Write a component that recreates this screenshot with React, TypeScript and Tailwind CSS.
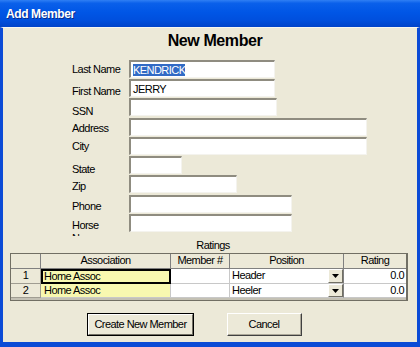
import React from "react";

function Row({
  label,
  labelPad,
  fieldW,
  mt,
  children,
  labelClip,
}: {
  label: string;
  labelPad: string;
  fieldW: string;
  mt: string;
  children?: React.ReactNode;
  labelClip?: boolean;
}) {
  return (
    <div className={`flex h-[18px] pl-[69px] ${mt}`}>
      <div className={`w-[57px] shrink-0 ${labelPad}`}>
        <div
          className={
            labelClip
              ? "w-[40px] h-[17px] overflow-hidden leading-[13px]"
              : "leading-[13px] whitespace-nowrap"
          }
        >
          {label}
        </div>
      </div>
      <div
        className={`h-[18px] ${fieldW} bg-white border-t-2 border-l-2 border-t-[#8F8C80] border-l-[#8F8C80] border-b border-r border-b-[#F4F3EE] border-r-[#F4F3EE] pl-[2px] pt-[1px] leading-[14px] whitespace-nowrap`}
      >
        {children}
      </div>
    </div>
  );
}

function DropBtn() {
  return (
    <div className="w-[15px] h-full bg-[#ECE9D8] border-t border-l border-t-white border-l-white border-r border-b border-r-[#716F64] border-b-[#716F64] flex items-center justify-center">
      <svg width="7" height="4" viewBox="0 0 7 4">
        <polygon points="0,0 7,0 3.5,4" fill="#000" />
      </svg>
    </div>
  );
}

export default function App() {
  return (
    <div className="w-[420px] h-[347px] overflow-hidden flex flex-col font-['Liberation_Sans',Arial,sans-serif] text-[11px] tracking-[-0.55px] text-black">
      {/* title bar */}
      <div className="h-[27px] shrink-0 bg-[linear-gradient(to_bottom,#2F7FF4_0%,#0A60EA_12%,#0056E6_45%,#004FDD_75%,#0043C9_100%)] flex items-center pl-[6px]">
        <span className="text-white font-bold text-[12px] tracking-[-0.4px] [text-shadow:1px_1px_0_#0A2A8A]">
          Add Member
        </span>
      </div>
      {/* body */}
      <div className="flex-1 flex flex-col bg-[#ECE9D8] border-l-[3px] border-r-[3px] border-b-[5px] border-[#0B4BD6] border-t border-t-[#F7F6F0]">
        <div className="mt-[3px] h-[20px] leading-[20px] pl-[10px] text-center font-bold text-[16px] tracking-[-0.4px]">
          New Member
        </div>

        <div className="mt-[9px] flex flex-col">
          <Row label="Last Name" labelPad="pt-[2.5px]" fieldW="w-[146px]" mt="">
            <span className="bg-[#316AC5] text-white">KENDRICK</span>
          </Row>
          <Row label="First Name" labelPad="pt-[5.5px]" fieldW="w-[146px]" mt="mt-[1px]">
            JERRY
          </Row>
          <Row label="SSN" labelPad="pt-[6.5px]" fieldW="w-[148px]" mt="mt-[1px]" />
          <Row label="Address" labelPad="pt-[3.5px]" fieldW="w-[238px]" mt="mt-[2px]" />
          <Row label="City" labelPad="pt-[3px]" fieldW="w-[238px]" mt="mt-[1px]" />
          <Row label="State" labelPad="pt-[6.5px]" fieldW="w-[53px]" mt="mt-[1px]" />
          <Row label="Zip" labelPad="pt-[4.5px]" fieldW="w-[108px]" mt="mt-[1px]" />
          <Row label="Phone" labelPad="pt-[4.5px]" fieldW="w-[163px]" mt="mt-[2px]" />
          <Row
            label="Horse Name"
            labelPad="pt-[4.5px]"
            fieldW="w-[163px]"
            mt="mt-[1px]"
            labelClip
          />
        </div>

        <div className="mt-[6px] h-[14px] leading-[14px] pl-[6px] text-center">
          Ratings
        </div>

        {/* grid */}
        <div className="mt-[1px] ml-[7px] w-[398px] border border-[#716F64] border-r-2 bg-[#C4C1B4] leading-[13px]">
          <div className="flex h-[15px] border-b border-[#808080] bg-[#ECE9D8] text-center">
            <div className="w-[30px] border-r border-[#808080]" />
            <div className="w-[130px] border-r border-[#808080]">Association</div>
            <div className="w-[59px] border-r border-[#808080]">Member #</div>
            <div className="w-[114px] border-r border-[#808080]">Position</div>
            <div className="w-[62px]">Rating</div>
          </div>
          {/* row 1 */}
          <div className="flex h-[15px]">
            <div className="w-[30px] bg-[#ECE9D8] border-r border-b border-[#A09D92] text-center">
              1
            </div>
            <div className="w-[130px] bg-[#F8F8B0] border-2 border-black pl-[1px] leading-[11px]">
              Home Assoc
            </div>
            <div className="w-[59px] bg-white border-r border-b border-[#C8C8C8]" />
            <div className="w-[114px] bg-white border-r border-b border-r-[#808080] border-b-[#C8C8C8] flex">
              <div className="flex-1 pl-[2px]">Header</div>
              <DropBtn />
            </div>
            <div className="w-[62px] bg-white border-b border-[#C8C8C8] text-right pr-[2px]">
              0.0
            </div>
          </div>
          {/* row 2 */}
          <div className="flex h-[14px]">
            <div className="w-[30px] bg-[#ECE9D8] border-r border-b border-[#A09D92] text-center">
              2
            </div>
            <div className="w-[130px] bg-[#F8F8B0] border-r border-b border-[#C8C8C8] pl-[3px]">
              Home Assoc
            </div>
            <div className="w-[59px] bg-white border-r border-b border-[#C8C8C8]" />
            <div className="w-[114px] bg-white border-r border-b border-r-[#808080] border-b-[#C8C8C8] flex">
              <div className="flex-1 pl-[2px]">Heeler</div>
              <DropBtn />
            </div>
            <div className="w-[62px] bg-white border-b border-[#C8C8C8] text-right pr-[2px]">
              0.0
            </div>
          </div>
          <div className="h-[2px]" />
        </div>

        {/* buttons */}
        <div className="mt-[12px] flex pl-[84px] gap-[33px]">
          <div className="w-[107px] h-[23px] border border-black">
            <div className="w-full h-full border-t border-l border-t-white border-l-white border-r border-b border-r-[#716F64] border-b-[#716F64] flex items-center justify-center">
              Create New Member
            </div>
          </div>
          <div className="w-[75px] h-[23px] border-t border-l border-t-white border-l-white border-r border-b border-r-[#404040] border-b-[#404040]">
            <div className="w-full h-full border-r border-b border-r-[#ACA899] border-b-[#ACA899] flex items-center justify-center">
              Cancel
            </div>
          </div>
        </div>
      </div>
    </div>
  );
}
